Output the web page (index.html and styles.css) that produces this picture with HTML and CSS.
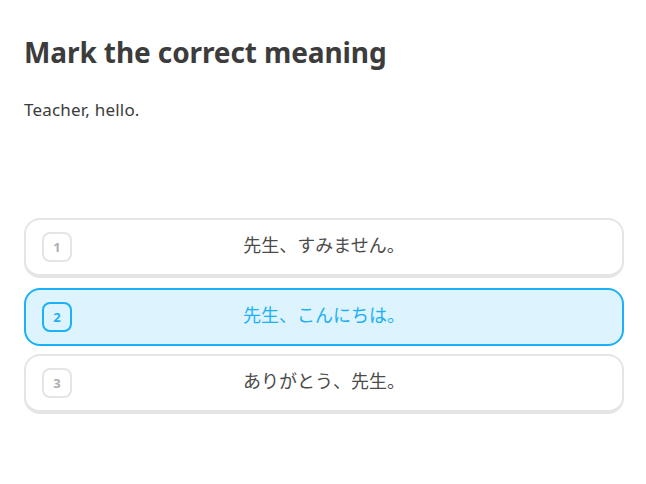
FILE: index.html
```html
<!DOCTYPE html>
<html lang="en">
<head>
<meta charset="utf-8">
<link rel="stylesheet" href="styles.css">
</head>
<body>
<main class="page">
  <h1 class="title">Mark the correct meaning</h1>
  <p class="prompt">Teacher, hello.</p>
  <div class="choices">
    <div class="choice"><span class="num">1</span><span class="label">先生、すみません。</span></div>
    <div class="choice selected"><span class="num">2</span><span class="label">先生、こんにちは。</span></div>
    <div class="choice"><span class="num">3</span><span class="label">ありがとう、先生。</span></div>
  </div>
</main>
</body>
</html>
```

FILE: styles.css
```css
html, body {
  margin: 0;
  padding: 0;
  background: #ffffff;
}
.page {
  padding: 34px 22px 0 24px;
  font-family: "Noto Sans", "Noto Sans CJK JP", sans-serif;
  color: #4b4b4b;
}
.title {
  margin: 0;
  font-size: 28px;
  line-height: 36px;
  font-weight: 700;
  color: #3c3c3c;
  letter-spacing: -0.1px;
}
.prompt {
  margin: 28px 0 0 0;
  font-size: 17px;
  line-height: 24px;
  color: #3c3c3c;
  letter-spacing: 0.2px;
}
.choices {
  margin-top: 96px;
  width: 600px;
  display: flex;
  flex-direction: column;
  gap: 8px;
}
.choice {
  box-sizing: border-box;
  height: 60px;
  border: 2px solid #e5e5e5;
  border-bottom-width: 4px;
  border-radius: 16px;
  display: flex;
  align-items: center;
  padding: 0 16px;
  position: relative;
  background: #fff;
}
.choice.selected {
  height: 58px;
  margin-top: 2px;
  border-color: #1cb0f6;
  border-bottom-width: 2px;
  background: #ddf4ff;
}
.num {
  box-sizing: border-box;
  width: 30px;
  height: 30px;
  border: 2px solid #e5e5e5;
  border-radius: 8px;
  display: flex;
  align-items: center;
  justify-content: center;
  font-size: 13px;
  font-weight: 700;
  color: #afafaf;
  font-family: "Noto Sans", sans-serif;
  flex: none;
}
.selected .num {
  border-color: #1cb0f6;
  color: #1cb0f6;
}
.label {
  position: absolute;
  left: 0;
  right: 0;
  top: 13px;
  text-align: center;
  font-size: 18px;
  line-height: 24px;
  color: #4b4b4b;
  pointer-events: none;
}
.selected .label {
  color: #1cb0f6;
}
```
